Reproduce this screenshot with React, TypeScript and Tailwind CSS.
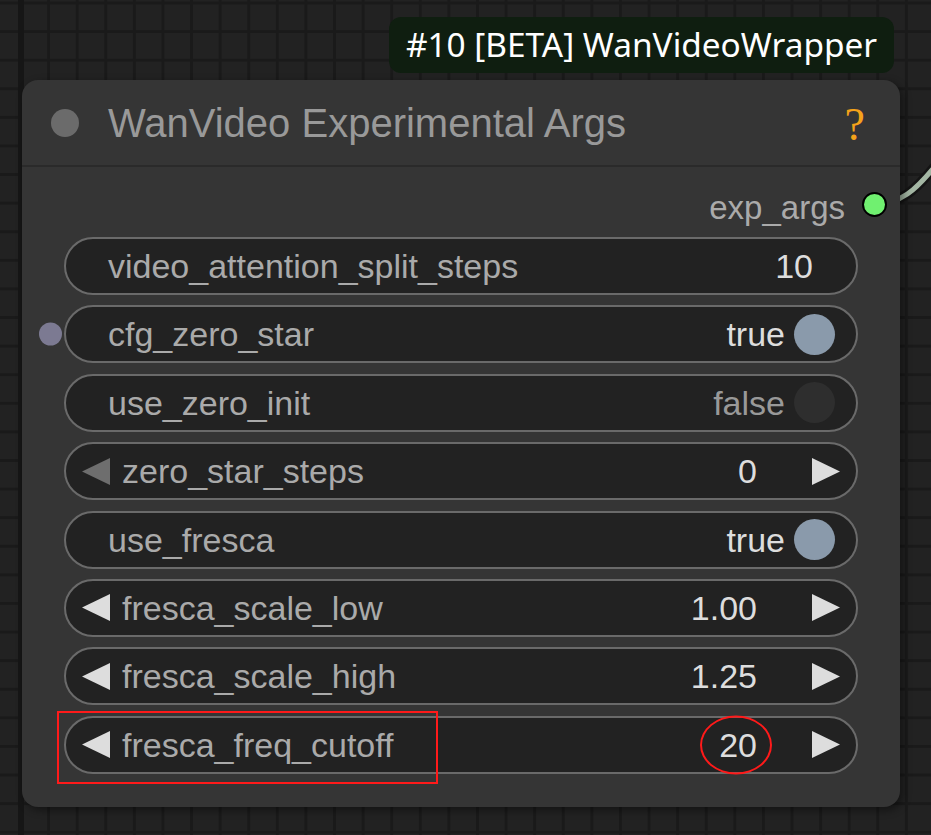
import React from "react";

type Row =
  | { kind: "number"; label: string; value: string }
  | { kind: "toggle"; label: string; on: boolean; input?: boolean }
  | { kind: "stepper"; label: string; value: string; leftDisabled?: boolean; annotated?: boolean };

const rows: Row[] = [
  { kind: "number", label: "video_attention_split_steps", value: "10" },
  { kind: "toggle", label: "cfg_zero_star", on: true, input: true },
  { kind: "toggle", label: "use_zero_init", on: false },
  { kind: "stepper", label: "zero_star_steps", value: "0", leftDisabled: true },
  { kind: "toggle", label: "use_fresca", on: true },
  { kind: "stepper", label: "fresca_scale_low", value: "1.00" },
  { kind: "stepper", label: "fresca_scale_high", value: "1.25" },
  { kind: "stepper", label: "fresca_freq_cutoff", value: "20", annotated: true },
];

function LeftArrow({ disabled }: { disabled?: boolean }) {
  return (
    <svg width="28" height="27" viewBox="0 0 28 27" className="shrink-0">
      <polygon points="28,0 28,27 0,13.5" fill={disabled ? "#6e6e6e" : "#dddddd"} />
    </svg>
  );
}

function RightArrow() {
  return (
    <svg width="28" height="27" viewBox="0 0 28 27" className="shrink-0">
      <polygon points="0,0 0,27 28,13.5" fill="#dddddd" />
    </svg>
  );
}

function Widget({ row }: { row: Row }) {
  const base =
    "relative h-[58px] rounded-full border-2 border-[#6a6a6a] bg-[#222222] flex items-center text-[34px] leading-none";
  if (row.kind === "number") {
    return (
      <div className={`${base} pl-[42px] pr-[43px]`}>
        <span className="text-[#aaaaaa] flex-1">{row.label}</span>
        <span className="text-[#dddddd]">{row.value}</span>
      </div>
    );
  }
  if (row.kind === "toggle") {
    return (
      <div className={`${base} pl-[42px] pr-[21px]`}>
        {row.input && (
          <div className="absolute left-[-27px] top-1/2 -translate-y-1/2 w-[23px] h-[23px] rounded-full bg-[#7c7a92]" />
        )}
        <span className="text-[#aaaaaa] flex-1">{row.label}</span>
        <span className={row.on ? "text-[#dddddd]" : "text-[#999999]"}>{row.on ? "true" : "false"}</span>
        <div
          className={`ml-[9px] w-[41px] h-[41px] rounded-full ${row.on ? "bg-[#8a9aab]" : "bg-[#2e2e2e]"}`}
        />
      </div>
    );
  }
  return (
    <div className={`${base} pl-[16px] pr-[16px]`}>
      <LeftArrow disabled={row.leftDisabled} />
      <span className="ml-[12px] text-[#aaaaaa] flex-1">{row.label}</span>
      <span className="relative text-[#dddddd]">
        {row.value}
        {row.annotated && (
          <span className="absolute left-[-19px] top-1/2 -translate-y-1/2 w-[72px] h-[59px] rounded-[50%] border-2 border-[#ff1a1a]" />
        )}
      </span>
      <span className="w-[55px]" />
      <RightArrow />
      {row.annotated && (
        <div className="absolute left-[-9px] top-[-7px] w-[381px] h-[73px] border-2 border-[#ff1a1a]" />
      )}
    </div>
  );
}

export default function App() {
  return (
    <div
      className="relative w-[931px] h-[835px] overflow-hidden bg-[#222222] bg-[linear-gradient(to_right,#1a1a1a_3px,transparent_3px),linear-gradient(to_bottom,#1a1a1a_3px,transparent_3px)] bg-size-[28.6px_28.6px] bg-position-[18.5px_1.5px]"
      style={{ fontFamily: '"Liberation Sans", Arial, sans-serif' }}
    >
      {/* major grid line */}
      <div className="absolute left-[18px] top-0 w-[6px] h-full bg-[#161616]" />

      {/* connection link */}
      <svg className="absolute left-0 top-0" width="931" height="835" viewBox="0 0 931 835">
        <path d="M874 204 C 900 204, 915 192, 940 160" fill="none" stroke="#141414" strokeWidth="10" />
        <path d="M874 204 C 900 204, 915 192, 940 160" fill="none" stroke="#a3b6a3" strokeWidth="5" />
      </svg>

      {/* badge */}
      <div
        className="absolute left-[389px] top-[17px] w-[505px] h-[56px] rounded-[12px] bg-[#0f1e10] flex items-center justify-center text-white text-[33.4px] leading-none"
        style={{ fontFamily: '"Noto Sans", sans-serif' }}
      >
        #10 [BETA] WanVideoWrapper
      </div>

      {/* node */}
      <div className="absolute left-[22px] top-[80px] w-[878px] h-[727px] rounded-[16px] bg-[#353535] shadow-[3px_3px_8px_rgba(0,0,0,0.45)] flex flex-col">
        <div className="h-[85px] flex items-center pl-[29px] pr-[35px]">
          <div className="w-[28px] h-[28px] rounded-full bg-[#6b6b6b]" />
          <span className="ml-[29px] flex-1 text-[40px] leading-none text-[#999999]">
            WanVideo Experimental Args
          </span>
          <span
            className="text-[46px] leading-none text-[#f5a31a] translate-y-[2px]"
            style={{ fontFamily: '"Liberation Serif", serif' }}
          >
            ?
          </span>
        </div>
        <div className="h-[2px] bg-[#2a2a2a]" />
        <div className="flex flex-col pt-[4px] px-[42px]">
          <div className="h-[66px] flex items-center justify-end">
            <span className="text-[33px] leading-none text-[#aaaaaa] translate-y-[3px]">exp_args</span>
            <div className="ml-[17px] mr-[-29px] w-[25px] h-[25px] rounded-full bg-[#70f070] border-2 border-black" />
          </div>
          <div className="flex flex-col gap-[10.4px]">
            {rows.map((r) => (
              <Widget key={r.label} row={r} />
            ))}
          </div>
        </div>
      </div>
    </div>
  );
}
